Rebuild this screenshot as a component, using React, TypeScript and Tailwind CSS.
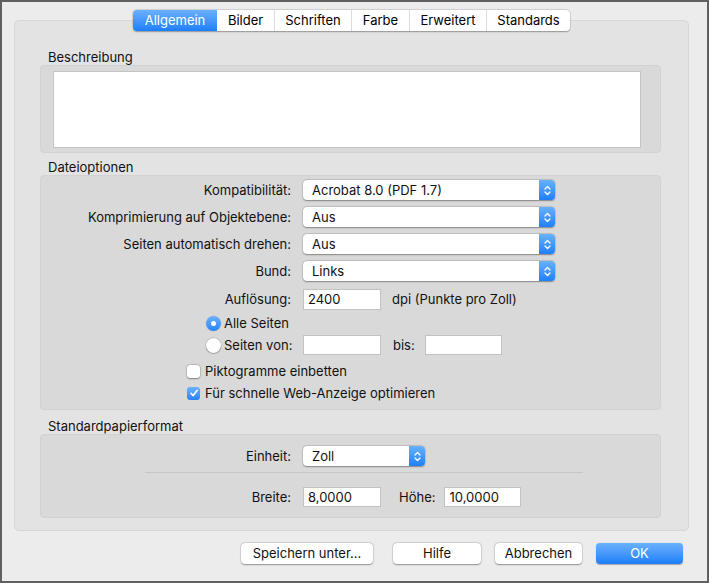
import React from "react";

const Chevrons = () => (
  <svg width="9" height="13" viewBox="0 0 9 13" fill="none">
    <path d="M2 5 L4.5 2.5 L7 5" stroke="white" strokeWidth="1.3" strokeLinecap="round" strokeLinejoin="round" />
    <path d="M2 8 L4.5 10.5 L7 8" stroke="white" strokeWidth="1.3" strokeLinecap="round" strokeLinejoin="round" />
  </svg>
);

const Select = ({ value, w }: { value: string; w: string }) => (
  <div className={`${w} h-[20px] flex rounded-[4px] bg-white shadow-[0_0.5px_1.5px_rgba(0,0,0,0.35),0_0_0_0.5px_rgba(0,0,0,0.12)]`}>
    <div className="flex-1 pl-[9px] flex items-center leading-none">{value}</div>
    <div className="w-[16px] h-full rounded-r-[4px] bg-gradient-to-b from-[#66b1fc] to-[#1d7ff9] flex items-center justify-center">
      <Chevrons />
    </div>
  </div>
);

const Input = ({ value = "", w = "w-[77px]", h = "h-[20px]" }: { value?: string; w?: string; h?: string }) => (
  <div className={`${w} ${h} shrink-0 bg-white border border-[#c2c2c2] flex items-center pl-[4px] leading-none`}>{value}</div>
);

const Radio = ({ on }: { on: boolean }) =>
  on ? (
    <div className="w-[15px] h-[15px] shrink-0 rounded-full bg-gradient-to-b from-[#6ab2fc] to-[#2683fa] flex items-center justify-center shadow-[0_0_0_0.5px_rgba(0,0,0,0.1)]">
      <div className="w-[5px] h-[5px] rounded-full bg-white" />
    </div>
  ) : (
    <div className="w-[15px] h-[15px] shrink-0 rounded-full bg-white shadow-[0_0.5px_1.5px_rgba(0,0,0,0.35),0_0_0_0.5px_rgba(0,0,0,0.15)]" />
  );

const Check = ({ on }: { on: boolean }) =>
  on ? (
    <div className="w-[13px] h-[13px] shrink-0 rounded-[3px] bg-gradient-to-b from-[#6ab2fc] to-[#2683fa] flex items-center justify-center">
      <svg width="10" height="10" viewBox="0 0 10 10" fill="none">
        <path d="M2 5.3 L4.2 7.6 L8.2 2.3" stroke="white" strokeWidth="1.6" strokeLinecap="round" strokeLinejoin="round" />
      </svg>
    </div>
  ) : (
    <div className="w-[13px] h-[13px] shrink-0 rounded-[3px] bg-white shadow-[0_0.5px_1.5px_rgba(0,0,0,0.35),0_0_0_0.5px_rgba(0,0,0,0.15)]" />
  );

const Row = ({ label, children, mt }: { label: string; children: React.ReactNode; mt: string }) => (
  <div className={`flex items-center ${mt}`}>
    <div className="w-[250px] shrink-0 text-right leading-none">{label}</div>
    <div className="ml-[12px] flex items-center">{children}</div>
  </div>
);

const Button = ({ label, w, primary }: { label: string; w: string; primary?: boolean }) => (
  <div
    className={`${w} h-[21px] rounded-[4px] flex items-center justify-center leading-none ${
      primary
        ? "bg-gradient-to-b from-[#69b1fc] to-[#1b7ef9] text-white shadow-[0_0.5px_1px_rgba(0,0,0,0.3)]"
        : "bg-white shadow-[0_0.5px_1.5px_rgba(0,0,0,0.35),0_0_0_0.5px_rgba(0,0,0,0.12)]"
    }`}
  >
    {label}
  </div>
);

export default function App() {
  const tabs = ["Allgemein", "Bilder", "Schriften", "Farbe", "Erweitert", "Standards"];
  const tabW = ["w-[84px]", "w-[57px]", "w-[77px]", "w-[58px]", "w-[77px]", "w-[84px]"];
  return (
    <div className="w-[709px] h-[583px] bg-[#ececec] border-2 border-[#606060] font-['Inter',sans-serif] text-[13px] text-[#111] flex flex-col">
      <div className="ml-[12px] mt-[8px] w-[675px] flex justify-center relative z-10">
        <div className="flex h-[21px] rounded-[4px] bg-white shadow-[0_0.5px_1.5px_rgba(0,0,0,0.3),0_0_0_0.5px_rgba(0,0,0,0.12)]">
          {tabs.map((t, i) => (
            <div
              key={t}
              className={`${tabW[i]} flex items-center justify-center leading-none ${
                i === 0
                  ? "bg-gradient-to-b from-[#68b0fc] to-[#1b7ef9] text-white rounded-l-[4px]"
                  : "border-l border-[#dcdcdc] text-black"
              } ${i === 1 ? "border-l-0" : ""}`}
            >
              {t}
            </div>
          ))}
        </div>
      </div>
      <div className="ml-[12px] -mt-[11px] w-[675px] h-[511px] bg-[#e3e3e3] border border-[#d6d6d6] rounded-[5px] pt-[28px] pl-[25px]">
        <div className="w-[621px]">
          <div className="h-[16px] pl-[8px] leading-[16px]">Beschreibung</div>
          <div className="h-[88px] bg-[#d9d9d9] border border-[#d2d2d2] rounded-[4px] pt-[5px] pl-[12px]">
            <div className="w-[588px] h-[77px] bg-white border border-[#c4c4c4]" />
          </div>

          <div className="mt-[6px] h-[16px] pl-[8px] leading-[16px]">Dateioptionen</div>
          <div className="h-[235px] bg-[#d9d9d9] border border-[#d2d2d2] rounded-[4px] pt-[4px] flex flex-col">
            <Row label="Kompatibilität:" mt="mt-0">
              <Select value="Acrobat 8.0 (PDF 1.7)" w="w-[252px]" />
            </Row>
            <Row label="Komprimierung auf Objektebene:" mt="mt-[7px]">
              <Select value="Aus" w="w-[252px]" />
            </Row>
            <Row label="Seiten automatisch drehen:" mt="mt-[7px]">
              <Select value="Aus" w="w-[252px]" />
            </Row>
            <Row label="Bund:" mt="mt-[7px]">
              <Select value="Links" w="w-[252px]" />
            </Row>
            <Row label="Auflösung:" mt="mt-[8px]">
              <Input value="2400" w="w-[78px]" h="h-[21px]" />
              <span className="ml-[11px] leading-none">dpi (Punkte pro Zoll)</span>
            </Row>
            <div className="mt-[5px] h-[16px] pl-[165px] flex items-center gap-[3px]">
              <Radio on={true} />
              <span className="leading-none">Alle Seiten</span>
            </div>
            <div className="mt-[4px] flex items-center">
              <div className="w-[262px] shrink-0 pl-[165px] flex items-center gap-[3px]">
                <Radio on={false} />
                <span className="leading-none">Seiten von:</span>
              </div>
              <Input w="w-[78px]" />
              <span className="ml-[12px] leading-none">bis:</span>
              <div className="ml-[10px]">
                <Input w="w-[77px]" />
              </div>
            </div>
            <div className="mt-[8px] h-[16px] pl-[146px] flex items-center gap-[5px]">
              <Check on={false} />
              <span className="leading-none">Piktogramme einbetten</span>
            </div>
            <div className="mt-[6px] h-[16px] pl-[146px] flex items-center gap-[5px]">
              <Check on={true} />
              <span className="leading-none">Für schnelle Web-Anzeige optimieren</span>
            </div>
          </div>

          <div className="mt-[8px] h-[16px] pl-[8px] leading-[16px]">Standardpapierformat</div>
          <div className="h-[84px] bg-[#d9d9d9] border border-[#d2d2d2] rounded-[4px] pt-[11px] flex flex-col">
            <Row label="Einheit:" mt="mt-0">
              <Select value="Zoll" w="w-[122px]" />
            </Row>
            <div className="mt-[6px] ml-[104px] w-[438px] h-[1px] bg-[#c6c6c6]" />
            <Row label="Breite:" mt="mt-[14px]">
              <Input value="8,0000" w="w-[78px]" />
              <span className="ml-[18px] leading-none">Höhe:</span>
              <div className="ml-[9px]">
                <Input value="10,0000" w="w-[77px]" />
              </div>
            </Row>
          </div>
        </div>
      </div>
      <div className="mt-[12px] pr-[24px] flex justify-end gap-[14px]">
        <div className="mr-[6px]">
          <Button label="Speichern unter..." w="w-[132px]" />
        </div>
        <Button label="Hilfe" w="w-[88px]" />
        <Button label="Abbrechen" w="w-[87px]" />
        <Button label="OK" w="w-[87px]" primary />
      </div>
    </div>
  );
}
